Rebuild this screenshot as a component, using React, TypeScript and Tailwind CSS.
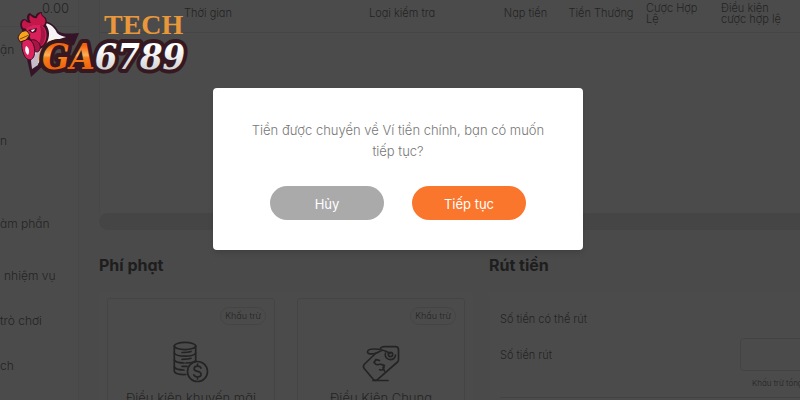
import { clsx } from 'clsx';

const menu = [
  { label: 'ận', gap: 'mt-[13px]' },
  { label: 'n', gap: 'mt-[71px]' },
  { label: 'àm phần', gap: 'mt-[63px]' },
  { label: 'nhiệm vụ', gap: 'mt-8', indent: 'pl-1' },
  { label: 'trò chơi', gap: 'mt-[25px]' },
  { label: 'ch', gap: 'mt-[25px]' },
];

const columns = [
  { label: 'Thời gian', className: 'w-[216px] text-center' },
  { label: 'Loại kiểm tra', className: 'w-[172px] text-center' },
  { label: 'Nạp tiền', className: 'w-[75px] text-center' },
  { label: 'Tiền Thưởng', className: 'w-[76px] text-center' },
  { label: 'Cược Hợp Lệ', className: 'w-[75px] pl-[7px] pr-3 text-left' },
  { label: 'Điều kiện cược hợp lệ', className: 'pl-[7px] pr-2 text-left' },
];

function CoinsIcon() {
  return (
    <svg viewBox="0 0 36 42" className="h-[42px] w-9" fill="none" stroke="currentColor" strokeWidth="1.7" strokeLinecap="round" aria-hidden>
      <ellipse cx="12" cy="5" rx="10.7" ry="3.6" />
      <path d="M1.3 5v25c0 2.300 4.500 3.800 11.500 3.500M22.700 5v14" />
      <path d="M1.300 12c1 2.200 5 3.200 10.700 3.200S21.700 14.200 22.700 12" />
      <path d="M1.300 19c1 2 5 3 9.700 3M13 22c4.500 0 8-.8 9.700-2.500M1.300 26c1 2 5 3 9.700 3" />
      <path d="M9 11.500c4 0 7-.3 9-1M9 18.300c4 0 7-.3 9-1M9 25.300h5" />
      <circle cx="24.500" cy="30.500" r="10" />
      <path d="M28 27c-.7-1.400-2-1.900-3.500-1.900-2 0-3.400 1-3.400 2.600 0 3.700 7 1.700 7 5.500 0 1.600-1.500 2.700-3.600 2.700-1.700 0-3.100-.7-3.700-2.100M24.500 23v2M24.500 36v2" />
    </svg>
  );
}

function TagIcon() {
  return (
    <svg viewBox="0 0 38 38" className="h-[38px] w-[38px]" fill="none" stroke="currentColor" strokeWidth="1.7" strokeLinecap="round" strokeLinejoin="round" aria-hidden>
      <path d="M13.500 8.500 2.600 19c-1.500 1.500-1.500 3-.4 4.500L11 34c1.500 1.700 3.400 1.700 5 .2L35.500 17c.7-.7 1-1.300 1-2.300V5c0-2-1-3.300-3-3.300H22c-1.500 0-2.300.4-3.500 1.500" />
      <path d="M11 35.500h15" />
      <path d="M28 8.500C23 5 17 4 11.500 4 8 4 5.500 5.300 5.500 7c0 2.300 5 2.200 7.300 1.500C16 7.500 18 6 20.500 5.200" />
      <circle cx="28.500" cy="9.500" r="2.200" />
      <path d="M23.500 8c-1 3 .5 6 4 6.500 3.500.4 6-1.500 6-4.500" />
      <path d="M17.500 15.500c-2-1.200-4.300-.6-4.800 1-.7 2.300 1.500 3.700 3.800 3 2.800-.8 5.700.3 5.500 3-.1 2-2.200 3-4.300 2.200M14 14.500l-2 3M21 22.500l1.500 3.500M20 19.500l2.500 1" />
    </svg>
  );
}

const penalties = [
  { title: 'Điều kiện khuyến mãi', icon: <CoinsIcon /> },
  { title: 'Điều Kiện Chung', icon: <TagIcon /> },
];

function Logo() {
  return (
    <svg viewBox="0 0 176 72" className="absolute left-4 top-2 h-[72px] w-44" role="img" aria-label="TECH GA6789">
      <defs>
        <linearGradient id="orange" x1="0" y1="0" x2="0" y2="1">
          <stop offset="0.250" stopColor="#f2650f" />
          <stop offset="0.480" stopColor="#ffb257" />
          <stop offset="0.540" stopColor="#f57f1c" />
          <stop offset="0.850" stopColor="#f05c08" />
        </linearGradient>
        <linearGradient id="silver" x1="0" y1="0" x2="0" y2="1">
          <stop offset="0.300" stopColor="#ffffff" />
          <stop offset="0.850" stopColor="#d2d2d4" />
        </linearGradient>
      </defs>
      {/* neck feathers */}
      <path d="M26 13c7 0 13 4 16 10 4 3 9 3 21 2l-5 12-26 6-4 14-13 12-4-18z" fill="#351427" />
      <path d="M29 15c6 1 10 5 12 10 3 3 6 3 9 4l-16 5-6 14-7 9-5 2-1-14z" fill="#f6f3f5" />
      <path d="M29 36l-4 9-2 4-1 8-6 4-1-10z" fill="#c9bac9" />
      {/* comb, face and wattles */}
      <path d="M6 22c-3-5-2-10 2-11 2 0 3 1 4 2-2-4-1-7 2-8 2 2 4 3 6 3 0-3 3-4 6-4-1 3 2 4 4 6 1 3 1 5 0 7 3 4 4 9 2 15-2 6-6 9-11 10L7 28z" fill="#3b0f24" />
      <path d="M7 20c-2-4-1-7 2-8 1 2 3 3 6 3-2-3-2-6-1-8 2 2 4 4 7 3 0-2 2-4 4-5 0 3 3 4 4 6 1 3 0 5-2 7-6-2-13-2-16 3z" fill="#c4184a" />
      <path d="M10 21c4-5 13-6 18-2 4 5 3 14-1 18-4 3-9 2-11-2-1-4-3-8-6-14z" fill="#d9205a" />
      <path d="M24 17c5 3 7 9 4 16-1 4-4 6-8 6 5-4 6-12 4-22z" fill="#a21643" />
      <path d="M15 32c4-1 7 1 9 5 1 4-1 7-3 7-4 0-6-5-6-12z" fill="#a91445" stroke="#3b0f24" strokeWidth="1" />
      <path d="M6 34c4-5 10-3 12 4 2 7 0 13-4 14-5 0-9-9-8-18z" fill="#dc225c" stroke="#3b0f24" strokeWidth="1" />
      <path d="M10 38c3 1 4 6 2 9-2-1-4-5-2-9z" fill="#fff" />
      <path d="M12 22l5-1 4-1-1 4-4 1z" fill="#3b0f24" />
      <path d="M15 22l4-1-1 2-2 1z" fill="#fff3ed" />
      <path d="M2 30c1-5 5-8 9-7l3 4-4 5-6 2-1-2z" fill="#f4a51c" stroke="#3b0f24" strokeWidth="1" />
      <path d="M4 31l9-4" stroke="#8b3f10" strokeWidth="1" />
      <text x="88" y="26" className="font-['Liberation_Serif'] text-[28px] font-bold" fill="#e8973b">TECH</text>
      <text
        x="26"
        y="61"
        className="font-['DejaVu_Serif_Condensed','DejaVu_Serif'] text-[36px] font-bold italic"
        stroke="#351820"
        strokeWidth="8"
        strokeLinejoin="round"
        paintOrder="stroke"
      >
        <tspan fill="url(#orange)">GA</tspan>
        <tspan fill="url(#silver)">6789</tspan>
      </text>
    </svg>
  );
}

function ConfirmDialog() {
  return (
    <div className="absolute inset-0 flex items-start justify-center bg-black/70 pr-1 pt-[88px]">
      <div role="dialog" aria-modal="true" aria-describedby="confirm-text" className="w-[370px] rounded-[4px] bg-white px-9 pb-[30px] pt-8 shadow-md">
        <p id="confirm-text" className="text-center text-[13px] leading-[21px] text-[#777]">
          Tiền được chuyển về Ví tiền chính, bạn có muốn tiếp tục?
        </p>
        <div className="mt-6 flex justify-center gap-7 text-[13px] font-normal text-white">
          <button type="button" className="h-[34px] w-[114px] rounded-full bg-[#aaaaaa] pt-1">Hủy</button>
          <button type="button" className="h-[34px] w-[114px] rounded-full bg-[#fb762d] pt-1">Tiếp tục</button>
        </div>
      </div>
    </div>
  );
}

export default function App() {
  return (
    <div className="relative flex h-screen overflow-hidden bg-[#f7f7f7] font-['Inter','Noto_Sans',sans-serif] font-light text-[#777] [font-feature-settings:'cv11']">
      <aside className="w-[79px] shrink-0 overflow-hidden border-r border-[#eee] bg-[#fcfcfc]">
        <div className="h-[27px] border-b border-[#eee] pr-[9px] text-right text-[13px] leading-4">0.00</div>
        <nav className="flex flex-col items-start whitespace-nowrap text-[12px] leading-5">
          {menu.map((item) => (
            <a key={item.label} href="#" className={clsx(item.gap, item.indent)}>
              {item.label}
            </a>
          ))}
        </nav>
      </aside>

      <main className="min-w-0 flex-1 pl-5">
        <div className="h-[213px] border-l border-[#eee] bg-[#fcfcfc]">
          <table className="w-full table-fixed">
            <thead>
              <tr className="h-8 border-b border-[#e8e8e8] text-[11px] leading-[11px]">
                {columns.map((col) => (
                  <th key={col.label} className={clsx('pb-1 font-light', col.className)}>{col.label}</th>
                ))}
              </tr>
            </thead>
          </table>
        </div>
        <div className="h-[17px] rounded-l-full bg-[#e8e8e8]" />

        <div className="mt-[23px] grid grid-cols-[374px_1fr] gap-x-4">
          <section>
            <h2 className="text-base leading-6 font-bold text-[#666]">Phí phạt</h2>
            <div className="mt-[15px] grid grid-cols-2 gap-[22px] bg-[#fcfcfc] px-2 pt-[6px]">
              {penalties.map((item) => (
                <article key={item.title} className="flex h-40 flex-col items-center rounded-[3px] border border-[#e4e4e4] pt-2">
                  <button type="button" className="mr-2 h-[18px] self-end rounded-full border border-[#e4e4e4] px-1 text-[9px]">
                    Khấu trừ
                  </button>
                  <div className="mt-3 flex h-[46px] items-end text-[#777]">{item.icon}</div>
                  <h3 className="mt-[5px] text-[13px] leading-5">{item.title}</h3>
                </article>
              ))}
            </div>
          </section>

          <section className="min-w-0">
            <h2 className="text-base leading-6 font-bold text-[#666]">Rút tiền</h2>
            <div className="mt-[15px] h-40 overflow-hidden bg-[#fcfcfc] pl-[11px] pt-[17px] text-[11px]">
              <p className="leading-5">Số tiền có thể rút</p>
              <div className="mt-[9px] flex items-center">
                <label htmlFor="amount" className="w-60 shrink-0 leading-5">Số tiền rút</label>
                <input id="amount" type="text" className="h-[33px] w-40 shrink-0 rounded-[4px] border border-[#e2e2e2] bg-[#fcfcfc] px-2" />
              </div>
              <p className="ml-60 mt-1 whitespace-nowrap pl-3 text-[8px] leading-4">Khấu trừ tổng</p>
              <hr className="mt-[6px] border-[#e2e2e2]" />
            </div>
          </section>
        </div>
      </main>

      <ConfirmDialog />
      <Logo />
    </div>
  );
}
